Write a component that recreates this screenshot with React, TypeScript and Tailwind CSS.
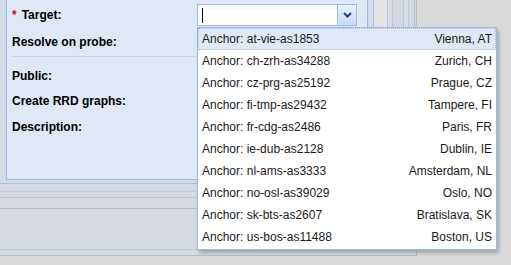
const anchors = [
  { name: 'at-vie-as1853', city: 'Vienna, AT' },
  { name: 'ch-zrh-as34288', city: 'Zurich, CH' },
  { name: 'cz-prg-as25192', city: 'Prague, CZ' },
  { name: 'fi-tmp-as29432', city: 'Tampere, FI' },
  { name: 'fr-cdg-as2486', city: 'Paris, FR' },
  { name: 'ie-dub-as2128', city: 'Dublin, IE' },
  { name: 'nl-ams-as3333', city: 'Amsterdam, NL' },
  { name: 'no-osl-as39029', city: 'Oslo, NO' },
  { name: 'sk-bts-as2607', city: 'Bratislava, SK' },
  { name: 'us-bos-as11488', city: 'Boston, US' },
];

function Label({ children }: { children: React.ReactNode }) {
  return <div className="w-[185px] shrink-0 text-[12px] font-bold text-black">{children}</div>;
}

export default function App() {
  return (
    <div className="relative w-[511px] h-[265px] overflow-hidden bg-[#dadada] font-['Liberation_Sans',Arial,sans-serif]">
      {/* desktop area */}
      <div className="w-[417px] h-[256px] bg-[#d5dae2] border-r border-b border-[#b6bfcc] flex flex-col">
        <div className="flex h-[184px] shrink-0">
          {/* window frame */}
          <div className="w-[374px] h-[184px] bg-[#d3dce8] border-r border-b border-[#aebfd6] pl-[6px] pr-[5px] pb-[3px]">
            <div className="h-full bg-[#dfe8f6] border-l border-r border-b border-[#99bbe8] pl-[5px] pt-[4px] flex flex-col">
              <div className="flex items-center h-[22px]">
                <Label>
                  <span className="text-[#e00000] mr-[5px]">*</span>Target:
                </Label>
                <div className="flex h-[22px] w-[160px]">
                  <div className="flex-1 bg-white border border-[#a9bcd6] border-r-0 bg-gradient-to-b from-[#f4f4f4] to-white to-[30%] flex items-center pl-[4px]">
                    <div className="w-px h-[15px] bg-black" />
                  </div>
                  <div className="w-[20px] border border-[#99bbe8] bg-gradient-to-b from-[#e9f1fc] to-[#c8dbf5] flex items-center justify-center">
                    <svg width="9" height="6" viewBox="0 0 9 6">
                      <path d="M1 1 L4.5 4.5 L8 1" fill="none" stroke="#15428b" strokeWidth="2" />
                    </svg>
                  </div>
                </div>
              </div>
              <div className="flex items-center h-[22px] mt-[5px]">
                <Label>Resolve on probe:</Label>
              </div>
              <div className="mt-[3px] mr-[1px] h-[2px] bg-[#d2d6dc] border-b border-[#e4e9f0]" />
              <div className="flex items-center h-[22px] mt-[7px]">
                <Label>Public:</Label>
              </div>
              <div className="flex items-center h-[22px] mt-[3px]">
                <Label>Create RRD graphs:</Label>
              </div>
              <div className="flex items-center h-[22px] mt-[4px]">
                <Label>Description:</Label>
              </div>
            </div>
          </div>
          {/* neighbouring columns */}
          <div className="w-[14px] bg-[#e4e4e4] border-r border-[#b9c6d8]" />
          <div className="w-[5px] bg-[#d7dce3] border-r border-[#b9c6d8]" />
          <div className="w-[11px] bg-[#d4d9e1] border-r border-[#b9c6d8]" />
          <div className="w-[5px] bg-[#d7dce3] border-r border-[#b9c6d8]" />
          <div className="w-[6px] bg-[#d4d9e1] border-r border-[#a9bdd8]" />
        </div>
        <div className="h-[8px] border-b border-[#c5ccd6]" />
        <div className="h-[6px] border-b border-[#bcc4cf]" />
        <div className="h-[11px] border-b border-[#b7bfca]" />
        <div className="flex-1 border-b border-[#c0c7d1]" />
        <div className="h-[5px]" />
      </div>

      {/* combo dropdown list */}
      <div className="absolute left-[197px] top-[27px] w-[300px] h-[223px] bg-white border border-[#99bbe8] shadow-[2px_3px_4px_rgba(0,0,0,0.25)]">
        {anchors.map((a, i) => (
          <div
            key={a.name}
            className={
              i === 0
                ? 'flex justify-between items-center h-[22px] px-[3px] text-[12px] text-[#1a1a1a] bg-[#dfe8f6] border border-dotted border-[#a3bae9]'
                : 'flex justify-between items-center h-[22px] px-[3px] text-[12px] text-[#1a1a1a] border border-transparent'
            }
          >
            <span>Anchor: {a.name}</span>
            <span>{a.city}</span>
          </div>
        ))}
      </div>
    </div>
  );
}
